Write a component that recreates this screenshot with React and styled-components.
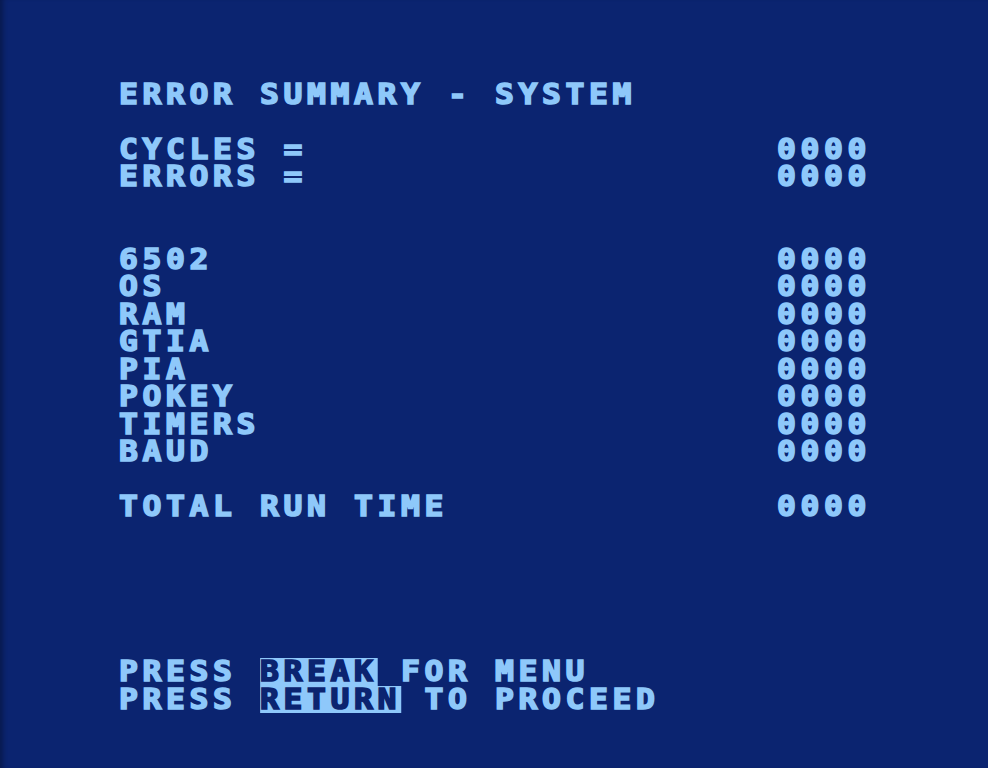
import React from 'react';
import styled, { createGlobalStyle } from 'styled-components';

// one character cell of the 40x24 text screen
const CELL_W = 23.5;
const CELL_H = 27.5;
const STRETCH = 1.12;
const ADVANCE = 28 * 0.602;

const BLUE = '#0b2470';
const INK = '#8ec8fa';

const GlobalStyle = createGlobalStyle`
  html, body {
    margin: 0;
    padding: 0;
    background: ${BLUE};
  }
`;

const Screen = styled.div`
  min-height: 100vh;
  box-sizing: border-box;
  background: ${BLUE};
  box-shadow: inset 6px 0 5px -3px rgba(0, 0, 0, 0.3);
  padding: 80.5px 0 0 119px;
  color: ${INK};
  font-family: "DejaVu Sans Mono", "Liberation Mono", monospace;
  font-weight: bold;
  font-size: 28px;
`;

const Line = styled.div`
  display: grid;
  grid-template-columns: ${CELL_W * 28}px ${CELL_W * 4}px;
  height: ${CELL_H}px;
  line-height: ${CELL_H}px;
  margin-top: ${(p) => (p.$skip || 0) * CELL_H}px;
  white-space: pre;
`;

// the chunky 8x8 look: stretched glyphs with strokes widened by an outline
const Text = styled.span`
  display: inline-block;
  justify-self: start;
  transform: scaleX(${STRETCH});
  transform-origin: left center;
  letter-spacing: ${CELL_W / STRETCH - ADVANCE}px;
  -webkit-text-stroke-width: 1.6px;
`;

const Key = styled.span`
  display: inline-block;
  height: ${CELL_H}px;
  background: ${INK};
  color: ${BLUE};
`;

const counters = [
  { label: 'CYCLES =', skip: 1 },
  { label: 'ERRORS =' },
  { label: '6502', skip: 2 },
  { label: 'OS' },
  { label: 'RAM' },
  { label: 'GTIA' },
  { label: 'PIA' },
  { label: 'POKEY' },
  { label: 'TIMERS' },
  { label: 'BAUD' },
  { label: 'TOTAL RUN TIME', skip: 1 },
];

export default function App() {
  return (
    <>
      <GlobalStyle />
      <Screen>
        <Line>
          <Text>ERROR SUMMARY - SYSTEM</Text>
        </Line>
        {counters.map((c) => (
          <Line key={c.label} $skip={c.skip}>
            <Text>{c.label}</Text>
            <Text>0000</Text>
          </Line>
        ))}
        <Line $skip={5}>
          <Text>
            PRESS <Key>BREAK</Key> FOR MENU
          </Text>
        </Line>
        <Line>
          <Text>
            PRESS <Key>RETURN</Key> TO PROCEED
          </Text>
        </Line>
      </Screen>
    </>
  );
}
